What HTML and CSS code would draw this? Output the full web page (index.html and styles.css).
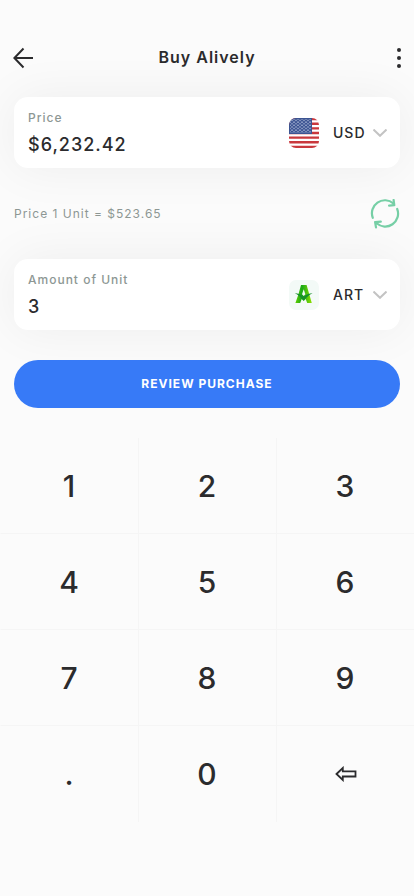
FILE: index.html
```html
<!DOCTYPE html>
<html lang="en">
<head>
<meta charset="utf-8">
<meta name="viewport" content="width=device-width, initial-scale=1">
<title>Buy Alively</title>
<link rel="stylesheet" href="styles.css">
</head>
<body>
<header class="topbar">
  <button class="icon-button" type="button" aria-label="Back">
    <svg width="20" height="22" viewBox="0 0 20 22" fill="none" stroke="currentColor" stroke-width="2"><path d="M10.500 1.500 1.400 11l9.100 9.500M1.400 11H20"/></svg>
  </button>
  <h1 class="title">Buy Alively</h1>
  <button class="icon-button icon-button-end" type="button" aria-label="More options">
    <svg width="4" height="20" viewBox="0 0 4 20" fill="currentColor"><circle cx="2" cy="2" r="2"/><circle cx="2" cy="10" r="2"/><circle cx="2" cy="18" r="2"/></svg>
  </button>
</header>
<main>
  <form class="order">
    <div class="card">
      <div class="field">
        <label class="label" for="price">Price</label>
        <input class="value" id="price" type="text" inputmode="none" value="$6,232.42">
      </div>
      <svg class="badge" width="30" height="30" viewBox="0 0 30 30" aria-hidden="true">
        <defs>
          <clipPath id="flag"><rect width="30" height="30" rx="7"/></clipPath>
          <pattern id="stars" width="4" height="3.200" patternUnits="userSpaceOnUse"><circle cx="1" cy="0.900" r="0.750" fill="#b9c4df"/><circle cx="3" cy="2.500" r="0.750" fill="#b9c4df"/></pattern>
        </defs>
        <g clip-path="url(#flag)">
          <path fill="#fff" d="M0 0h30v30H0z"/>
          <path stroke="#c9383d" stroke-width="2.310" d="M0 1.150h30M0 5.770h30M0 10.380h30M0 15h30M0 19.620h30M0 24.230h30M0 28.850h30"/>
          <path fill="#3c5492" d="M0 0h23v16H0z"/>
          <path fill="url(#stars)" d="M1 1h21v14H1z"/>
        </g>
      </svg>
      <div class="picker">
        <select class="unit" aria-label="Currency"><option>USD</option></select>
        <svg class="chevron" width="14" height="8" viewBox="0 0 14 8" fill="none" stroke="currentColor" stroke-width="2" aria-hidden="true"><path d="m.5.500 6.500 6.300 6.500-6.300"/></svg>
      </div>
    </div>
    <div class="rate">
      <p class="rate-text">Price 1 Unit = $523.65</p>
      <button class="swap" type="button" aria-label="Swap">
        <svg width="30" height="30" viewBox="0 0 30 30" fill="none" stroke="currentColor" stroke-width="2.200" stroke-linecap="round" stroke-linejoin="round"><path d="M2.800 18.800A12.900 12.900 0 0 1 23.400 4.500M27.200 10A12.900 12.900 0 0 1 6.600 24.300M23.600 1l.7 5.200-5.200.4M6 28.400l-.9-5.300 5.700-.5"/></svg>
      </button>
    </div>
    <div class="card">
      <div class="field">
        <label class="label" for="amount">Amount of Unit</label>
        <input class="value" id="amount" type="text" inputmode="none" value="3">
      </div>
      <svg class="badge" width="30" height="30" viewBox="0 0 30 30" aria-hidden="true">
        <defs><linearGradient id="leaf" x1="0" x2="1"><stop offset="0" stop-color="#5fce00"/><stop offset=".4" stop-color="#18a817"/><stop offset="1" stop-color="#8fe000"/></linearGradient></defs>
        <rect width="30" height="30" rx="7" fill="#f3faf7"/>
        <path fill="url(#leaf)" d="M12 5h5.600l5.200 18h-4.600l-1.500-4-2 2-2-2-1.500 4H6.400l3-8.500z"/>
        <path fill="#f3faf7" d="m14.700 9.300 1.700 5-1.700 1.700-1.700-1.700z"/>
        <path fill="#16902c" d="M5.800 13.200c3 .2 6 1 8.900 3.300 2.900-2.300 5.900-3.100 8.900-3.300-3.300 1.400-6 3.900-8.900 7.200-2.900-3.300-5.600-5.800-8.900-7.200z"/>
      </svg>
      <div class="picker">
        <select class="unit" aria-label="Unit"><option>ART</option></select>
        <svg class="chevron" width="14" height="8" viewBox="0 0 14 8" fill="none" stroke="currentColor" stroke-width="2" aria-hidden="true"><path d="m.5.500 6.500 6.300 6.500-6.300"/></svg>
      </div>
    </div>
    <button class="submit" type="button">REVIEW PURCHASE</button>
  </form>
  <div class="keypad">
    <button class="key" type="button">1</button>
    <button class="key" type="button">2</button>
    <button class="key" type="button">3</button>
    <button class="key" type="button">4</button>
    <button class="key" type="button">5</button>
    <button class="key" type="button">6</button>
    <button class="key" type="button">7</button>
    <button class="key" type="button">8</button>
    <button class="key" type="button">9</button>
    <button class="key" type="button">.</button>
    <button class="key" type="button">0</button>
    <button class="key" type="button" aria-label="Delete">
      <svg width="22" height="16" viewBox="0 0 22 16" fill="none" stroke="currentColor" stroke-width="1.800" aria-hidden="true"><path d="M1.500 8 7.800 2v3.300h12.700v5.200H7.800V14z"/></svg>
    </button>
  </div>
</main>
</body>
</html>
```
FILE: styles.css
```css
* {
  box-sizing: border-box;
}

body {
  margin: 0;
  min-height: 100vh;
  background: #fbfbfb;
  color: #2b2b2d;
  font-family: Inter, "Liberation Sans", sans-serif;
  letter-spacing: 1px;
}

button,
input,
select {
  margin: 0;
  padding: 0;
  border: 0;
  background: none;
  color: inherit;
  font: inherit;
  letter-spacing: inherit;
}

svg {
  display: block;
}

.topbar {
  display: flex;
  align-items: center;
  justify-content: space-between;
  padding: 36px 13px 0;
}

.icon-button {
  display: flex;
  align-items: center;
  width: 44px;
  height: 44px;
}

.icon-button-end {
  justify-content: flex-end;
}

.title {
  margin: 0;
  padding-bottom: 2px;
  font-size: 16px;
  font-weight: 600;
  line-height: 24px;
}

.order {
  padding: 17px 14px 30px;
}

.card {
  display: flex;
  align-items: center;
  padding: 12px 13px 12px 14px;
  border-radius: 14px;
  background: #fff;
  box-shadow: 0 0 50px rgba(0, 0, 0, 0.06);
}

.field {
  flex: 1;
  min-width: 0;
}

.label {
  display: block;
  color: #8d9794;
  font-size: 12px;
  font-weight: 500;
  line-height: 18px;
}

.value {
  display: block;
  width: 100%;
  height: 29px;
  padding-top: 5px;
  font-size: 18px;
  font-weight: 500;
  line-height: 24px;
}

.badge {
  flex: none;
  margin-right: 14px;
}

.picker {
  position: relative;
  width: 54px;
}

.unit {
  display: block;
  width: 100%;
  appearance: none;
  font-size: 14px;
  font-weight: 500;
  line-height: 24px;
}

.chevron {
  position: absolute;
  top: 50%;
  right: 0;
  margin-top: -4px;
  color: #c3c3c3;
  pointer-events: none;
}

.rate {
  display: flex;
  align-items: center;
  justify-content: space-between;
  height: 91px;
}

.rate-text {
  margin: 0;
  color: #8d9794;
  font-size: 12px;
  line-height: 18px;
}

.swap {
  color: #76cfa6;
}

.submit {
  display: block;
  position: relative;
  width: 100%;
  height: 48px;
  margin-top: 30px;
  padding-bottom: 2px;
  border-radius: 24px;
  background: #377af7;
  color: #fff;
  font-size: 12px;
  font-weight: 700;
}

.keypad {
  display: grid;
  grid-template-columns: repeat(3, 1fr);
  grid-auto-rows: 96px;
}

.key {
  display: flex;
  align-items: center;
  justify-content: center;
  border: solid #f5f5f5;
  border-width: 0 0 1px 1px;
  font-size: 30px;
  font-weight: 500;
}

.key:nth-child(3n + 1) {
  border-left-color: transparent;
}

.key:nth-last-child(-n + 3) {
  border-bottom: 0;
}
```
